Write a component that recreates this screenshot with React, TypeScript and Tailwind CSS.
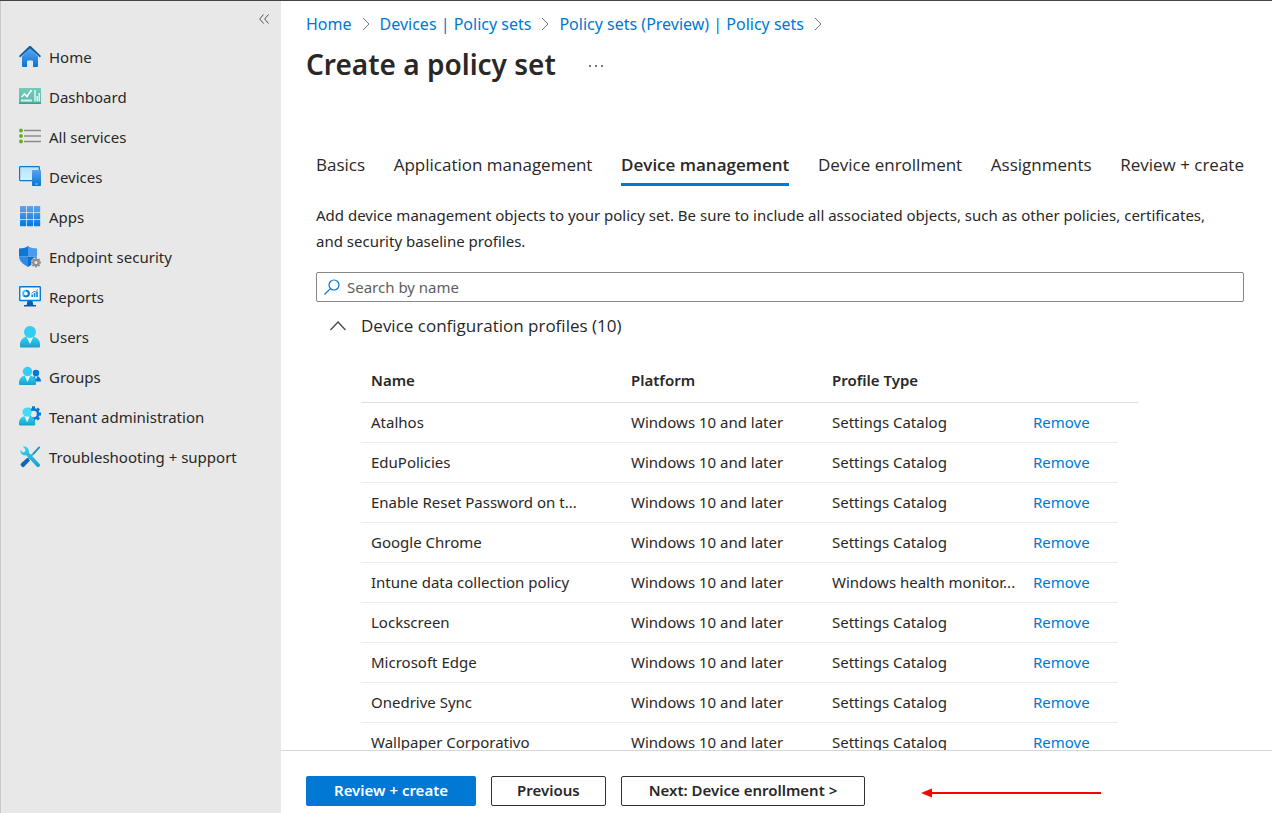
import type { ReactNode } from "react"

type MenuItem = { label: string; icon: ReactNode }
type Profile = { name: string; type: string }

const profiles: Profile[] = [
  { name: "Atalhos", type: "Settings Catalog" },
  { name: "EduPolicies", type: "Settings Catalog" },
  { name: "Enable Reset Password on t...", type: "Settings Catalog" },
  { name: "Google Chrome", type: "Settings Catalog" },
  { name: "Intune data collection policy", type: "Windows health monitor..." },
  { name: "Lockscreen", type: "Settings Catalog" },
  { name: "Microsoft Edge", type: "Settings Catalog" },
  { name: "Onedrive Sync", type: "Settings Catalog" },
  { name: "Wallpaper Corporativo", type: "Settings Catalog" },
]

const tabs = [
  "Basics",
  "Application management",
  "Device management",
  "Device enrollment",
  "Assignments",
  "Review + create",
]

const crumbs = ["Home", "Devices | Policy sets", "Policy sets (Preview) | Policy sets"]

function Icon({ children }: { children: ReactNode }) {
  return (
    <svg viewBox="0 0 22 22" className="size-[22px] shrink-0" aria-hidden="true">
      {children}
    </svg>
  )
}

// gradients shared by all menu icons
function Gradients() {
  return (
    <svg className="absolute size-0" aria-hidden="true">
      <defs>
        <linearGradient id="blue" x1="0" y1="0" x2="0" y2="1">
          <stop offset="0" stopColor="#5ea0ef" />
          <stop offset="1" stopColor="#0078d4" />
        </linearGradient>
        <linearGradient id="cyan" x1="0" y1="0" x2="0" y2="1">
          <stop offset="0" stopColor="#32d4f5" />
          <stop offset="1" stopColor="#1b9fc9" />
        </linearGradient>
        <linearGradient id="pale" x1="0" y1="0" x2="0" y2="1">
          <stop offset="0" stopColor="#b3e2fb" />
          <stop offset="1" stopColor="#d9f2ff" />
        </linearGradient>
        <linearGradient id="teal" x1="0" y1="0" x2="0" y2="1">
          <stop offset="0" stopColor="#6fccbd" />
          <stop offset="0.85" stopColor="#5cbcae" />
          <stop offset="1" stopColor="#36958a" />
        </linearGradient>
        <linearGradient id="apps" gradientUnits="userSpaceOnUse" x1="0" y1="1" x2="0" y2="21">
          <stop offset="0" stopColor="#5ea0ef" />
          <stop offset="1" stopColor="#0078d4" />
        </linearGradient>
      </defs>
    </svg>
  )
}

const gearTeeth = [0, 45, 90, 135, 180, 225, 270, 315]

const menu: MenuItem[] = [
  {
    label: "Home",
    icon: (
      <Icon>
        <path d="M3 10.5 11 2.5l8 8V20a1 1 0 0 1-1 1h-4v-5.500a1 1 0 0 0-1-1H9a1 1 0 0 0-1 1V21H4a1 1 0 0 1-1-1z" fill="url(#blue)" />
        <path d="M0 10.100 10.300 0a1 1 0 0 1 1.400 0L22 10.100 20.900 11.500 11 2.400 1.100 11.500z" fill="#0a5ea8" />
      </Icon>
    ),
  },
  {
    label: "Dashboard",
    icon: (
      <Icon>
        <rect y="2" width="22" height="16" rx="0.5" fill="url(#teal)" />
        <g transform="translate(0 -1)">
          <path d="M2.5 12 5.5 9l2.5 2.5 4-6" fill="none" stroke="#fff" strokeWidth="1.4" />
          <circle cx="12" cy="5.700" r="1" fill="#fff" />
          <circle cx="5.500" cy="9.200" r="1" fill="#fff" />
          <circle cx="8" cy="11.500" r="1" fill="#fff" />
          <path d="M2 15.500h11" stroke="#d3f2ec" strokeWidth="2" />
          <path d="M16 5v11.500M18.200 11v5.500M20.200 8v8.500" stroke="#e6f8f4" strokeWidth="1.400" />
        </g>
      </Icon>
    ),
  },
  {
    label: "All services",
    icon: (
      <Icon>
        <path d="M5 4.500h17M5 10h17M5 15.500h17" stroke="#8c8c8c" strokeWidth="1.500" />
        <circle cx="2" cy="4.500" r="1.900" fill="#66b01b" />
        <circle cx="2" cy="10" r="1.900" fill="#66b01b" />
        <circle cx="2" cy="15.500" r="1.900" fill="#66b01b" />
      </Icon>
    ),
  },
  {
    label: "Devices",
    icon: (
      <Icon>
        <rect x="0.600" y="0.600" width="19.800" height="14" rx="0.800" fill="url(#pale)" stroke="#0f78c8" strokeWidth="1.200" />
        <rect x="13" y="4" width="9" height="16" rx="0.700" fill="url(#blue)" />
        <rect x="16.500" y="17.500" width="2" height="1" fill="#cfe6fb" />
      </Icon>
    ),
  },
  {
    label: "Apps",
    icon: (
      <Icon>
        {[0, 7, 14].map((y) =>
          [1, 8, 15].map((x) => (
            <rect key={`${x}-${y}`} x={x} y={y} width="6.200" height="6.200" rx="0.400" fill="url(#apps)" />
          ))
        )}
      </Icon>
    ),
  },
  {
    label: "Endpoint security",
    icon: (
      <Icon>
        <path d="M9 0v10.500H0V2.500C3.600 2.400 6.400 2 9 0z" fill="#0f76d6" />
        <path d="M0 10.500h9V21c-4.300-2.500-8.700-5.300-9-10.500z" fill="#2f8ae6" />
        <path d="M9 10.500h9c-.3 5.200-4.700 8-9 10.500z" fill="#0f6fcc" />
        <path d="M9 0c2.600 2 5.400 2.400 9 2.500v8H9z" fill="#4a9bee" />
        <g transform="translate(17 16.500)" fill="#8f8f8f">
          <circle r="5" fill="#e8e8e8" />
          {gearTeeth.map((a) => (
            <rect key={a} x="-1" y="-5" width="2" height="3" transform={`rotate(${a})`} />
          ))}
          <circle r="3.700" />
          <circle r="1.600" fill="#e8e8e8" />
        </g>
      </Icon>
    ),
  },
  {
    label: "Reports",
    icon: (
      <Icon>
        <rect x="0.700" y="0.700" width="20.600" height="13.800" rx="0.500" fill="#fff" stroke="#0a78d4" strokeWidth="1.400" />
        <path d="M8.500 15h5l.8 4H17v1.600H5V19h2.700z" fill="#0a5ea8" />
        <circle cx="7" cy="7.500" r="2.900" fill="none" stroke="#38c6ee" strokeWidth="1.900" />
        <path d="M7 4.600a2.900 2.900 0 1 1-2 5" fill="none" stroke="#0a78d4" strokeWidth="1.900" />
        <path d="M13.200 11V8.500M15.600 11V7M18 11V5.500" stroke="#1490d8" strokeWidth="1.700" />
        <path d="m12.500 7.500 2.500-2.200 1.300.7L19 3.500" fill="none" stroke="#0a5ea8" strokeWidth="0.800" />
      </Icon>
    ),
  },
  {
    label: "Users",
    icon: (
      <Icon>
        <path d="M1 20.500v-2C1 13.500 5 11 8 10.500h6c3 .5 7 3 7 8v2a1 1 0 0 1-1 1H2a1 1 0 0 1-1-1z" fill="url(#cyan)" />
        <path d="M7.600 10.800 11 18l3.400-7.200z" fill="#e6f7fd" />
        <circle cx="11" cy="6" r="6" fill="#32cdf0" />
      </Icon>
    ),
  },
  {
    label: "Groups",
    icon: (
      <Icon>
        <path d="M12 15.500c0-3.500 2.500-5.500 5-5.500s5 2 5 5.500H12z" fill="#0078d4" />
        <path d="m15.500 10.200 1.500 3.300 1.500-3.300z" fill="#e6f2fb" />
        <circle cx="17" cy="7" r="3.200" fill="#0078d4" />
        <path d="M0 18v-1.500C0 12.500 3 10 6 9.500h5c3 .5 6 3 6 7V18a1 1 0 0 1-1 1H1a1 1 0 0 1-1-1z" fill="url(#cyan)" />
        <path d="m5.800 9.700 2.700 6.300 2.700-6.300z" fill="#e6f7fd" />
        <circle cx="8.500" cy="5.500" r="4.700" fill="#32cdf0" />
      </Icon>
    ),
  },
  {
    label: "Tenant administration",
    icon: (
      <Icon>
        <g transform="translate(14.500 8)" fill="#0078d4">
          {gearTeeth.map((a) => (
            <rect key={a} x="-1.500" y="-7.700" width="3" height="4" transform={`rotate(${a})`} />
          ))}
          <circle r="5.900" />
          <circle r="3.300" fill="#e8e8e8" />
        </g>
        <path d="M0 18.500V17c0-3.800 2.800-6.200 5.500-6.700h5.200c2.800.5 5.500 2.900 5.500 6.700v1.500a1 1 0 0 1-1 1H1a1 1 0 0 1-1-1z" fill="url(#cyan)" />
        <path d="m5.500 10.300 2.600 6.200 2.600-6.200z" fill="#e6f7fd" />
        <circle cx="8.100" cy="6" r="4.600" fill="#3fdcf7" />
      </Icon>
    ),
  },
  {
    label: "Troubleshooting + support",
    icon: (
      <Icon>
        <path d="M20 .3 21.300 1.600 14.800 8.800l-1.500-1.300z" fill="#1b93c0" />
        <path d="m14 8-9.500 10" stroke="#22a6d6" strokeWidth="1.800" />
        <path d="M8.300 11.800 11 14.500l-5.600 6a1.800 1.800 0 0 1-2.600 0l-.6-.6a1.800 1.800 0 0 1 0-2.600z" fill="#0a68b4" />
        <path d="M3.700.6 6.500 3.500 6 5.800l-2.200.6L1.400 3.800c-.5 3.500 2.400 6.200 5.800 5.400l10.500 11.200a1.900 1.900 0 0 0 2.700-2.700L9.800 6.500C10.700 2.700 7.500-.4 3.700.6z" fill="url(#cyan)" />
      </Icon>
    ),
  },
]

function CrumbArrow() {
  return (
    <svg viewBox="0 0 8 14" className="h-[14px] w-2" fill="none" stroke="#767676" aria-hidden="true">
      <path d="m1 1 6 6-6 6" />
    </svg>
  )
}

function Sidebar() {
  return (
    <nav className="w-[281px] shrink-0 border-l border-[#c8c8c8] bg-[#e8e8e8]">
      <div className="flex h-9 items-center justify-end pr-3">
        <button aria-label="Collapse menu">
          <svg viewBox="0 0 10 10" className="size-[10px]" fill="none" stroke="#555">
            <path d="M4.500.5 0.700 5l3.800 4.500M9.500.5 5.700 5l3.800 4.500" />
          </svg>
        </button>
      </div>
      <ul>
        {menu.map((item) => (
          <li key={item.label}>
            <a href="#" className="flex h-10 items-center gap-2 pl-[18px] text-[15px]">
              {item.icon}
              {item.label}
            </a>
          </li>
        ))}
      </ul>
    </nav>
  )
}

function ProfileTable() {
  return (
    <div className="mr-[106px] ml-[45px]">
      <table className="w-full table-fixed border-collapse text-left text-[15px]">
        <colgroup>
          <col />
          <col className="w-[201px]" />
          <col className="w-[201px]" />
          <col className="w-[95px]" />
          <col className="w-5" />
        </colgroup>
        <thead>
          <tr className="h-11 border-b border-[#e1dfdd]">
            <th className="pl-[10px] font-semibold">Name</th>
            <th className="pl-[10px] font-semibold">Platform</th>
            <th className="pl-[10px] font-semibold">Profile Type</th>
            <td colSpan={2} />
          </tr>
        </thead>
        <tbody>
          {profiles.map((p) => (
            <tr key={p.name} className="h-10 whitespace-nowrap">
              <td className="border-b border-[#edebe9] pl-[10px]">{p.name}</td>
              <td className="border-b border-[#edebe9] pl-[10px]">Windows 10 and later</td>
              <td className="border-b border-[#edebe9] pl-[10px]">{p.type}</td>
              <td className="border-b border-[#edebe9] pl-[10px]">
                <button className="text-[#0078d4]">Remove</button>
              </td>
            </tr>
          ))}
        </tbody>
      </table>
    </div>
  )
}

function App() {
  return (
    <div className="flex h-screen overflow-hidden border-t border-[#444] bg-white font-['Noto_Sans','Open_Sans',sans-serif] text-[#292827]">
      <Gradients />
      <Sidebar />
      <div className="flex min-w-0 flex-1 flex-col">
        <main className="min-h-0 flex-1 overflow-hidden pt-[10px]">
          <div className="pl-[25px]">
            <div className="flex h-[26px] items-center gap-[10px] text-base text-[#0078d4]">
              {crumbs.map((c) => (
                <div key={c} className="flex items-center gap-[10px]">
                  <a href="#">{c}</a>
                  <CrumbArrow />
                </div>
              ))}
            </div>
            <div className="flex h-[54px] items-center gap-8">
              <h1 className="text-[28px] font-semibold">Create a policy set</h1>
              <button aria-label="More" className="pt-1">
                <svg viewBox="0 0 16 4" className="h-1 w-4" fill="#333">
                  <circle cx="2" cy="2" r="0.900" />
                  <circle cx="8" cy="2" r="0.900" />
                  <circle cx="14" cy="2" r="0.900" />
                </svg>
              </button>
            </div>
          </div>

          <div className="pt-[55px] pr-7 pl-[35px]">
            <div role="tablist" className="flex justify-between font-['Open_Sans',sans-serif] text-[17px]">
              {tabs.map((t) => (
                <button
                  key={t}
                  role="tab"
                  aria-selected={t === "Device management"}
                  className="h-10 border-b-3 border-transparent whitespace-nowrap aria-selected:border-[#0078d4] aria-selected:font-semibold"
                >
                  {t}
                </button>
              ))}
            </div>

            <p className="mt-4 pr-5 text-[15px] leading-[26px]">
              Add device management objects to your policy set. Be sure to include all associated objects, such as other
              policies, certificates, and security baseline profiles.
            </p>

            <label className="mt-[18px] flex h-[30px] items-center gap-[7px] rounded-[2px] border border-[#8a8886] pl-[7px]">
              <svg viewBox="0 0 16 16" className="size-4" fill="none" stroke="#0078d4" strokeWidth="1.200" aria-hidden="true">
                <circle cx="10" cy="6" r="5" />
                <path d="M6.400 9.600.5 15.500" />
              </svg>
              <input
                type="text"
                aria-label="Search by name"
                placeholder="Search by name"
                className="min-w-0 flex-1 text-[15px] outline-none placeholder:text-[#605e5c]"
              />
            </label>

            <button
              aria-expanded="true"
              className="flex h-12 items-center gap-[15px] pl-[14px] font-['Open_Sans',sans-serif] text-[17px]"
            >
              <svg viewBox="0 0 16 10" className="h-[10px] w-4" fill="none" stroke="#444" strokeWidth="1.200" aria-hidden="true">
                <path d="M.5 9 8 1l7.500 8" />
              </svg>
              Device configuration profiles (10)
            </button>

            <div className="mt-2">
              <ProfileTable />
            </div>
          </div>
        </main>

        <footer className="flex h-[63px] shrink-0 items-start gap-[15px] border-t border-[#d8d8d8] pt-[25px] pl-[25px] text-[15px] font-semibold">
          <button className="h-[30px] rounded-[2px] bg-[#0078d4] px-7 pb-0.5 text-white">Review + create</button>
          <button className="h-[30px] rounded-[2px] border border-[#323130] px-[25px] pb-0.5">Previous</button>
          <button className="h-[30px] rounded-[2px] border border-[#323130] px-[27px] pb-0.5">
            Next: Device enrollment &gt;
          </button>
          <svg viewBox="0 0 180 10" className="mt-3 ml-[41px] h-[10px] w-[180px]" aria-hidden="true">
            <path d="M10 5h170" stroke="#f00" strokeWidth="2" />
            <path d="M0 5 11 .5v9z" fill="#f00" />
          </svg>
        </footer>
      </div>
    </div>
  )
}

export default App
